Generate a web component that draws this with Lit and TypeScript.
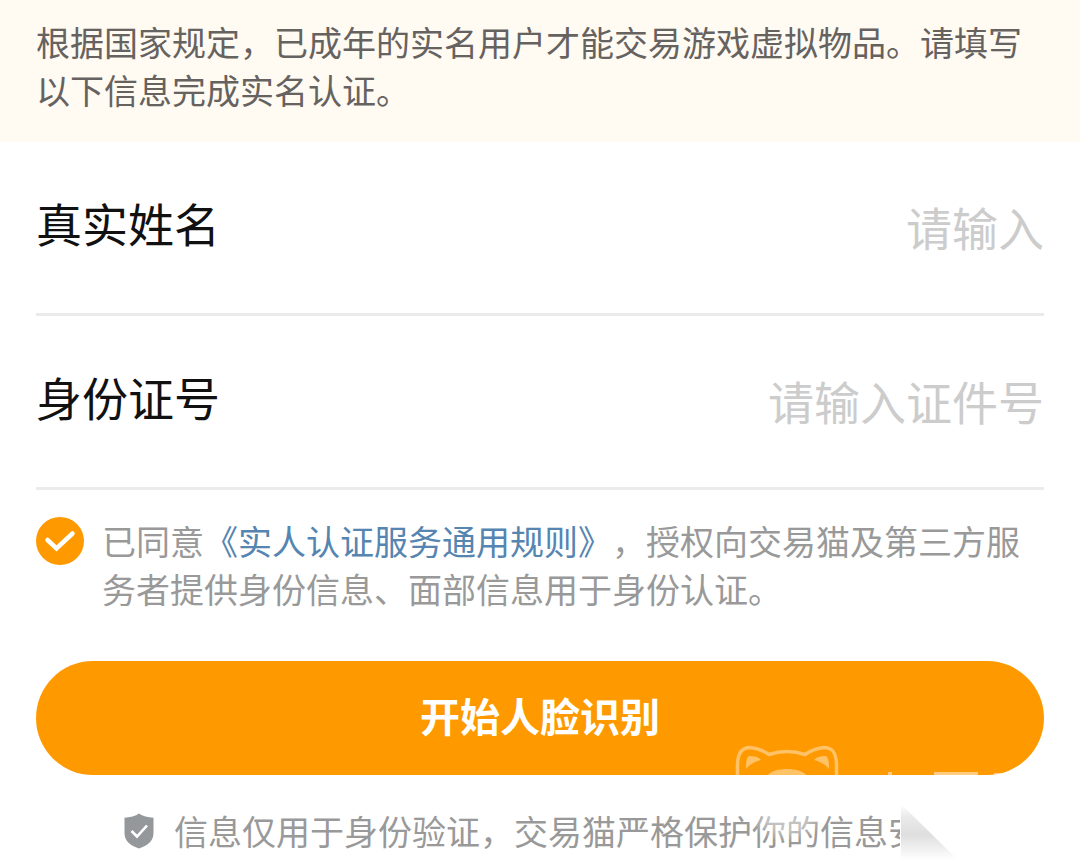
import { LitElement, html, css } from "lit";
import { customElement, property, state } from "lit/decorators.js";

@customElement("form-row")
class FormRow extends LitElement {
  @property() label = "";
  @property() hint = "";
  @property() mode = "text";

  static styles = css`
    :host {
      display: block;
    }
    .row {
      display: flex;
      align-items: center;
      justify-content: space-between;
      gap: 36px;
      padding: 46px 0 56px;
      border-bottom: 3px solid #ebebeb;
    }
    .label {
      flex: none;
      font-size: 46px;
      line-height: 69px;
      color: #111;
    }
    .input {
      flex: 1;
      min-width: 0;
      height: 69px;
      padding: 6px 0 0;
      box-sizing: border-box;
      border: 0;
      outline: 0;
      background: none;
      font: inherit;
      font-size: 46px;
      text-align: right;
      color: #111;
    }
    .input::placeholder {
      color: #ccc;
      opacity: 1;
    }
  `;

  render() {
    return html`
      <div class="row">
        <label class="label" for="field">${this.label}</label>
        <input class="input" id="field" type="text" inputmode=${this.mode} placeholder=${this.hint} />
      </div>
    `;
  }
}

@customElement("app-root")
class AppRoot extends LitElement {
  @state() agreed = true;

  static styles = css`
    :host {
      display: block;
      position: relative;
      min-height: 100vh;
      overflow: hidden;
      background: #fff;
      font-family: "Noto Sans CJK SC", "Noto Sans", sans-serif;
      font-size: 34px;
      line-height: 48px;
      text-spacing-trim: space-all;
    }
    .notice {
      margin: 0;
      padding: 18px 36px 28px;
      background: #fffaf2;
      color: #666260;
    }
    .form {
      display: flex;
      flex-direction: column;
      padding: 0 36px;
    }
    .agree {
      display: flex;
      align-items: flex-start;
      gap: 18px;
      margin-top: 27px;
      color: #999;
    }
    .tick {
      display: grid;
      flex: none;
      width: 48px;
      height: 48px;
    }
    .box {
      grid-area: 1 / 1;
      appearance: none;
      width: 48px;
      height: 48px;
      margin: 0;
      box-sizing: border-box;
      border: 3px solid #ccc;
      border-radius: 50%;
    }
    .box:checked {
      border: 0;
      background: #ff9900;
    }
    .mark {
      grid-area: 1 / 1;
      pointer-events: none;
    }
    .link {
      color: #5585b0;
      text-decoration: none;
    }
    .submit {
      height: 114px;
      margin-top: 48px;
      padding: 0 0 6px;
      border: 0;
      border-radius: 57px;
      background: #ff9900;
      color: #fff;
      font: inherit;
      font-size: 40px;
      font-weight: 700;
    }
    .safe {
      display: flex;
      align-items: center;
      justify-content: center;
      gap: 20px;
      margin: 0;
      padding: 32px 0 8px;
      color: #999;
      white-space: nowrap;
    }
    .shield {
      flex: none;
    }
    .stamp {
      position: absolute;
      right: 0;
      bottom: 0;
      pointer-events: none;
    }
  `;

  private toggle(e: Event) {
    this.agreed = (e.target as HTMLInputElement).checked;
  }

  render() {
    return html`
      <p class="notice">根据国家规定，已成年的实名用户才能交易游戏虚拟物品。请填写以下信息完成实名认证。</p>
      <main class="form">
        <form-row label="真实姓名" hint="请输入"></form-row>
        <form-row label="身份证号" hint="请输入证件号"></form-row>
        <div class="agree">
          <span class="tick">
            <input class="box" id="agree" type="checkbox" .checked=${this.agreed} @change=${this.toggle} />
            ${this.agreed
              ? html`<svg class="mark" width="48" height="48" viewBox="0 0 48 48" aria-hidden="true">
                  <path d="M11.500 24 20.500 32.500 36.500 17.500" transform="translate(0 -1)" fill="none" stroke="#fff" stroke-width="4.500" stroke-linecap="round" />
                </svg>`
              : ""}
          </span>
          <label for="agree">已同意<a class="link" href="#rules">《实人认证服务通用规则》</a>，授权向交易猫及第三方服务者提供身份信息、面部信息用于身份认证。</label>
        </div>
        <button class="submit" type="button">开始人脸识别</button>
        <p class="safe">
          <svg class="shield" width="30" height="36" viewBox="0 0 30 36" aria-hidden="true">
            <path d="M15 0.5C18.500 3 24 4.500 29.500 4.800V20C29.500 28 23.500 32.500 15 35.500 6.500 32.500.5 28 .5 20V4.800C6 4.500 11.500 3 15 .5Z" fill="#94989b" />
            <path d="M7.500 18 13 23.500 23 12.500" fill="none" stroke="#fff" stroke-width="2.600" />
          </svg>
          <span>信息仅用于身份验证，交易猫严格保护你的信息安全</span>
        </p>
      </main>
      <svg class="stamp" width="360" height="126" viewBox="720 740 360 126" aria-hidden="true">
        <defs>
          <linearGradient id="fold" x1="0" y1="804" x2="0" y2="860" gradientUnits="userSpaceOnUse">
            <stop offset="0" stop-color="#fff" />
            <stop offset="0.200" stop-color="#ececec" />
            <stop offset="0.550" stop-color="#dedede" />
            <stop offset="1" stop-color="#fff" />
          </linearGradient>
          <radialGradient id="nose">
            <stop offset="0.500" stop-color="#fff" stop-opacity="0.400" />
            <stop offset="1" stop-color="#fff" stop-opacity="0" />
          </radialGradient>
        </defs>
        <path
          d="M737.500 800V764C738 752 743 747.500 750 747.500 758 748 763 750.500 769 754.500 781 750.500 793 750.500 805 754.500 811 750.500 816 748 824 747.500 832 747.500 836 752 836.500 764V800"
          fill="none"
          stroke="#fff"
          stroke-width="3.500"
          opacity="0.400"
        />
        <path d="M746 769C746 760 747 756 750 756 755 756 759 757.500 761 760 754 762 749 765 746 769ZM829 769C829 760 828 756 825 756 820 756 816 757.500 814 760 821 762 826 765 829 769ZM768 775C774 767 800 767 806 775Z" fill="#fff" opacity="0.400" />
        <path d="M888 772h4v3h-4ZM934 772h44v3h-44ZM994 773h9v2h-9Z" fill="#fff" opacity="0.500" />
        <ellipse cx="787" cy="820" rx="38" ry="22" fill="url(#nose)" />
        <path d="M900 800H1080V866H900Z" fill="#fff" />
        <path d="M901 804 958 860H901Z" fill="url(#fold)" />
      </svg>
    `;
  }
}
